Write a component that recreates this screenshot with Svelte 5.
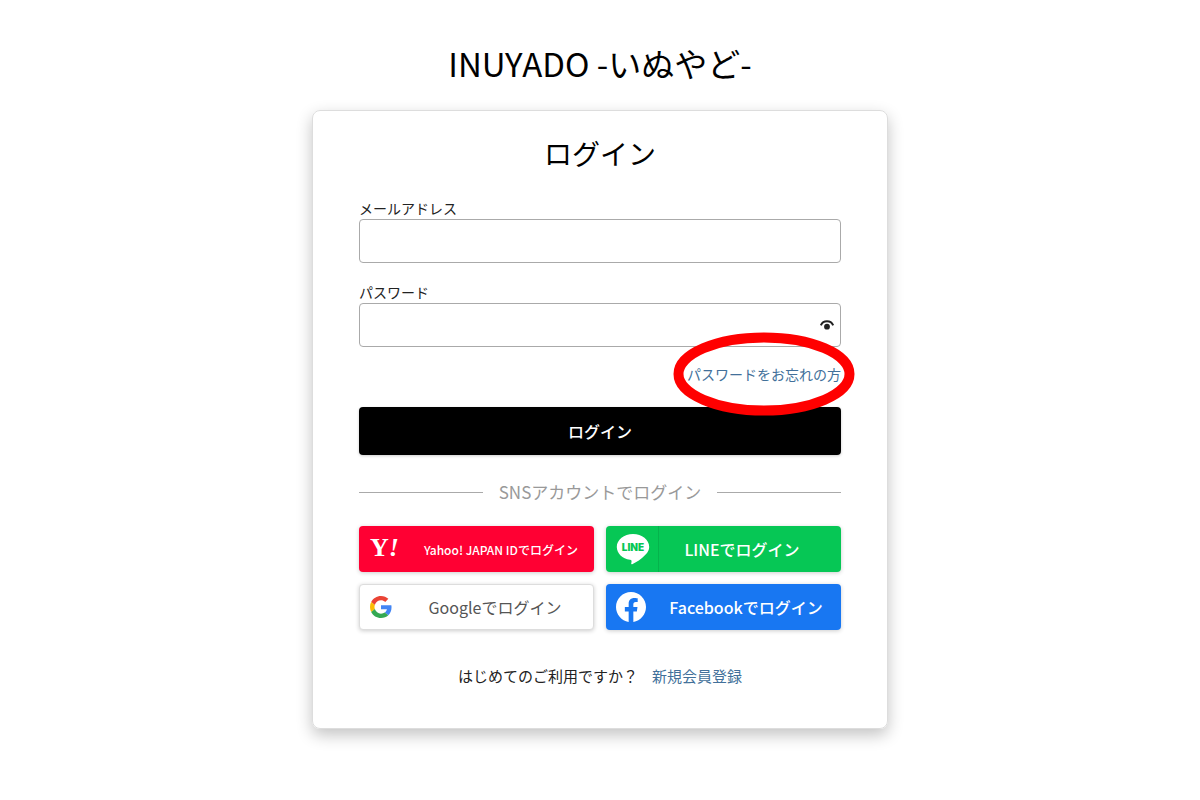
<script>
    let email = $state('')
    let password = $state('')
    let showPassword = $state(false)

    const providers = [
        { id: 'yahoo', label: 'Yahoo! JAPAN IDでログイン' },
        { id: 'line', label: 'LINEでログイン' },
        { id: 'google', label: 'Googleでログイン' },
        { id: 'facebook', label: 'Facebookでログイン' },
    ]
</script>

<!-- provider logos -->

{#snippet logo(id)}
    {#if id === 'yahoo'}
        <svg width="40" height="36" viewBox="0 0 40 36" aria-hidden="true">
            <text class="yahoo-mark" x="1" y="25">Y<tspan class="slanted">!</tspan></text>
        </svg>
    {:else if id === 'line'}
        <svg width="34" height="32" viewBox="0 0 34 32" aria-hidden="true">
            <path fill="#fff" d="M17 1C8 1 .8 6.800.8 14c0 6.400 5.600 11.700 13.200 12.800 1.600.3 1.700 1 1.500 2.100l-.3 1.700c-.1.600.4.900 1 .6 3.800-1.700 9.500-5.200 13.200-9.400 2.500-2.600 3.800-4.900 3.800-7.800C33.200 6.800 26 1 17 1z"/>
            <text class="line-mark" x="17" y="18" text-anchor="middle">LINE</text>
        </svg>
    {:else if id === 'google'}
        <svg width="22" height="22" viewBox="0 0 48 48" aria-hidden="true">
            <path fill="#ea4335" d="M24 9.500c3.540 0 6.710 1.220 9.210 3.600l6.850-6.850C35.900 2.380 30.470 0 24 0 14.620 0 6.510 5.380 2.560 13.220l7.980 6.190C12.430 13.720 17.740 9.500 24 9.500z"/>
            <path fill="#4285f4" d="M46.980 24.550c0-1.570-.15-3.090-.38-4.550H24v9.020h12.940c-.58 2.960-2.260 5.480-4.780 7.180l7.730 6c4.510-4.180 7.090-10.360 7.090-17.650z"/>
            <path fill="#fbbc05" d="M10.530 28.590c-.48-1.450-.76-2.990-.76-4.590s.27-3.140.76-4.590l-7.980-6.190C.92 16.460 0 20.120 0 24c0 3.880.92 7.540 2.560 10.780l7.970-6.190z"/>
            <path fill="#34a853" d="M24 48c6.480 0 11.930-2.130 15.890-5.810l-7.730-6c-2.150 1.450-4.920 2.300-8.160 2.300-6.260 0-11.570-4.220-13.470-9.910l-7.980 6.190C6.510 42.620 14.620 48 24 48z"/>
        </svg>
    {:else}
        <svg width="30" height="30" viewBox="0 0 24 24" aria-hidden="true">
            <path fill="#fff" d="M24 12.073C24 5.405 18.627 0 12 0S0 5.405 0 12.073C0 18.100 4.388 23.094 10.125 24v-8.437H7.078v-3.490h3.047v-2.660c0-3.025 1.792-4.697 4.533-4.697 1.312 0 2.686.236 2.686.236v2.971H15.830c-1.491 0-1.956.93-1.956 1.886v2.264h3.328l-.532 3.490h-2.796V24C19.612 23.094 24 18.100 24 12.073z"/>
        </svg>
    {/if}
{/snippet}

<main>
    <h1>INUYADO -いぬやど-</h1>

    <div class="card">
        <h2>ログイン</h2>

        <form onsubmit={(e) => e.preventDefault()}>
            <label for="email">メールアドレス</label>
            <input id="email" type="email" bind:value={email}>

            <label for="password">パスワード</label>
            <div class="password">
                <input id="password" type={showPassword ? 'text' : 'password'} bind:value={password}>
                <button class="eye" type="button" aria-label="パスワードを表示" onclick={() => showPassword = !showPassword}>
                    <svg width="14" height="10" viewBox="0 0 14 10" aria-hidden="true">
                        <path d="M.8 5.300C2 2.500 4.300 1.200 7 1.200s5 1.300 6.200 4.100" fill="none" stroke="#222" stroke-width="2"/>
                        <circle cx="7" cy="6.700" r="2.900" fill="#222"/>
                    </svg>
                </button>
            </div>

            <div class="forgot">
                <a href="#forgot">パスワードをお忘れの方</a>
                <svg class="ring" width="182" height="84" viewBox="0 0 182 84" aria-hidden="true">
                    <ellipse cx="91" cy="42" rx="85.500" ry="36.500" fill="none" stroke="#f00" stroke-width="10"/>
                </svg>
            </div>

            <button class="submit" type="submit">ログイン</button>
        </form>

        <div class="divider">SNSアカウントでログイン</div>

        <div class="providers">
            {#each providers as provider}
                <button class="provider {provider.id}" type="button">
                    <span class="logo">{@render logo(provider.id)}</span>
                    <span class="name">{provider.label}</span>
                </button>
            {/each}
        </div>

        <p class="signup">はじめてのご利用ですか？<a href="#signup">新規会員登録</a></p>
    </div>
</main>

<style>
    :global(body){
        background: #fff;
    }

    main{
        display: flex;
        flex-direction: column;
        align-items: center;
        padding: 39px 16px;
        font-family: "Noto Sans CJK JP", "Noto Sans", sans-serif;
        color: #222;
    }

    h1, h2{
        margin: 0;
        font-weight: 400;
        text-align: center;
        color: #000;
    }

    h1{
        font-size: 33px;
        line-height: 48px;
        margin-bottom: 23px;
    }

    h2{
        font-size: 28px;
        line-height: 40px;
        margin-bottom: 25px;
    }

    .card{
        box-sizing: border-box;
        width: 100%;
        max-width: 576px;
        padding: 22px 46px 40px;
        border: 1px solid #ddd;
        border-radius: 8px;
        box-shadow: 0 6px 16px rgba(0, 0, 0, 0.24);
    }

    label{
        display: block;
        margin-bottom: 1px;
        font-size: 14px;
        line-height: 20px;
    }

    input{
        display: block;
        box-sizing: border-box;
        width: 100%;
        height: 44px;
        padding: 0 12px;
        border: 1px solid #aaa;
        border-radius: 4px;
        background: #fff;
        font: inherit;
        font-size: 16px;
        margin-bottom: 19px;
    }

    .password{
        position: relative;
    }

    .password input{
        padding-right: 36px;
        margin-bottom: 16px;
    }

    button{
        font: inherit;
        border: 0;
        cursor: pointer;
    }

    .eye{
        position: absolute;
        top: 0;
        right: 0;
        display: grid;
        place-items: center;
        width: 28px;
        height: 44px;
        padding: 0;
        background: none;
    }

    .forgot{
        position: relative;
        width: max-content;
        margin: 0 0 22px auto;
        font-size: 14px;
        line-height: 22px;
    }

    .ring{
        position: absolute;
        top: 50%;
        left: 50%;
        transform: translate(-50%, -50%);
        pointer-events: none;
        z-index: 1;
    }

    a{
        color: #42709a;
        text-decoration: none;
    }

    .submit{
        display: block;
        width: 100%;
        height: 48px;
        border-radius: 4px;
        background: #000;
        color: #fff;
        font-size: 16px;
        font-weight: 500;
        box-shadow: 0 1px 3px rgba(0, 0, 0, 0.2);
    }

    .divider{
        display: flex;
        align-items: center;
        gap: 16px;
        margin: 24px 0 21px;
        font-size: 17px;
        line-height: 26px;
        color: #999;
    }

    .divider::before,
    .divider::after{
        content: "";
        flex: 1;
        height: 1px;
        background: #aaa;
    }

    .providers{
        display: grid;
        grid-template-columns: 1fr 1fr;
        gap: 12px;
    }

    .provider{
        display: flex;
        align-items: center;
        height: 46px;
        padding: 0 16px 0 0;
        border-radius: 4px;
        color: #fff;
        font-size: 16px;
        font-weight: 500;
        box-shadow: 0 1px 4px rgba(0, 0, 0, 0.2);
    }

    .logo{
        display: flex;
        align-items: center;
        box-sizing: border-box;
        width: 53px;
        height: 100%;
        padding-left: 10px;
    }

    .name{
        flex: 1;
        text-align: center;
        white-space: nowrap;
    }

    .yahoo{
        padding-right: 4px;
        background: #ff0033;
        font-size: 12px;
    }

    .line{
        background: #06c755;
    }

    .line .logo{
        border-right: 1px solid #05b34c;
    }

    .google{
        border: 1px solid #ddd;
        background: #fff;
        color: #555;
        font-weight: 400;
    }

    .facebook{
        padding-right: 8px;
        background: #1877f2;
    }

    .yahoo-mark{
        font: bold 26px "Liberation Serif", serif;
        fill: #fff;
    }

    .slanted{
        font-style: italic;
    }

    .line-mark{
        font: 900 10px Inter, sans-serif;
        fill: #06c755;
    }

    .signup{
        margin: 34px 0 0;
        font-size: 15px;
        line-height: 24px;
        text-align: center;
    }

    .signup a{
        margin-left: 14px;
    }
</style>
